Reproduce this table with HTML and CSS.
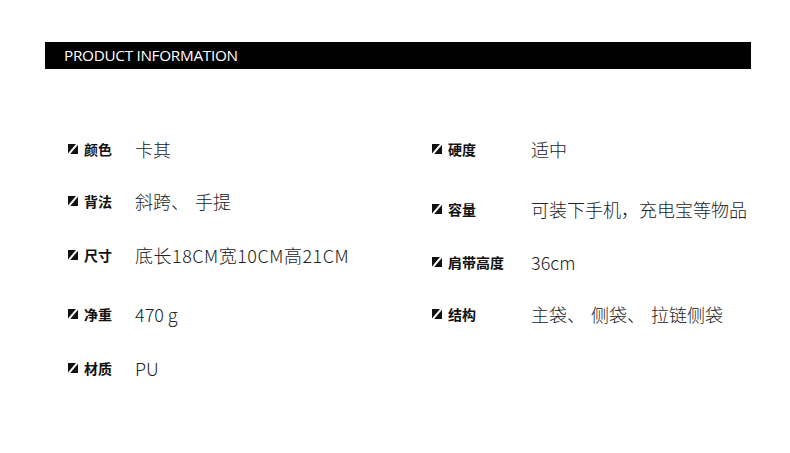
FILE: index.html
```html
<!DOCTYPE html>
<html lang="zh-CN">
<head>
    <meta charset="UTF-8">
    <meta name="viewport" content="width=device-width, initial-scale=1.0">
    <title>Product Information</title>
    <link rel="stylesheet" href="styles.css">
</head>
<body>
    <div class="page">
        <div class="title-bar">PRODUCT INFORMATION</div>

        <div class="info">
            <div class="col col-left">
                <div class="row">
                    <span class="mark"></span><span class="label">颜色</span><span class="value">卡其</span>
                </div>
                <div class="row">
                    <span class="mark"></span><span class="label">背法</span><span class="value">斜跨<span class="sep">、</span>手提</span>
                </div>
                <div class="row">
                    <span class="mark"></span><span class="label">尺寸</span><span class="value value-wide">底长18CM宽10CM高21CM</span>
                </div>
                <div class="row">
                    <span class="mark"></span><span class="label">净重</span><span class="value">470 g</span>
                </div>
                <div class="row">
                    <span class="mark"></span><span class="label">材质</span><span class="value">PU</span>
                </div>
            </div>
            <div class="col col-right">
                <div class="row">
                    <span class="mark"></span><span class="label">硬度</span><span class="value">适中</span>
                </div>
                <div class="row">
                    <span class="mark"></span><span class="label">容量</span><span class="value">可装下手机，充电宝等物品</span>
                </div>
                <div class="row">
                    <span class="mark"></span><span class="label">肩带高度</span><span class="value">36cm</span>
                </div>
                <div class="row">
                    <span class="mark"></span><span class="label">结构</span><span class="value">主袋<span class="sep">、</span>侧袋<span class="sep">、</span>拉链侧袋</span>
                </div>
            </div>
        </div>
    </div>
</body>
</html>
```

FILE: styles.css
```css
body {
    margin: 0;
    background: #fff;
    font-family: "Noto Sans CJK SC", "Noto Sans", sans-serif;
    color: #000;
}
.page {
    width: 790px;
    height: 453px;
    padding-top: 42px;
    box-sizing: border-box;
}
.title-bar {
    margin-left: 45px;
    width: 706px;
    height: 27px;
    background: #000;
    color: #fff;
    font-family: "Open Sans", sans-serif;
    font-size: 15.3px;
    line-height: 26px;
    padding-left: 19px;
    box-sizing: border-box;
    letter-spacing: -0.3px;
}
.info {
    display: flex;
    padding-left: 68px;
    padding-top: 66px;
}
.col {
    display: flex;
    flex-direction: column;
}
.col-left {
    width: 364px;
}
.row {
    display: flex;
    align-items: center;
    height: 28px;
}
.mark {
    width: 10px;
    height: 10px;
    background: #111;
    position: relative;
    overflow: hidden;
    margin-right: 6px;
}
.mark::after {
    content: "";
    position: absolute;
    left: 4px;
    top: -2px;
    width: 1.5px;
    height: 14px;
    background: #fff;
    transform: rotate(40deg);
}
.label {
    font-size: 14px;
    font-weight: bold;
    width: 51px;
    color: #111;
}
.col-right .label {
    width: 83px;
}
.value {
    font-size: 18px;
    font-weight: 300;
    color: #222;
}
.value-wide {
    letter-spacing: 0.5px;
}
.sep {
    margin-right: 6px;
}

/* row spacing follows the original artwork */
.col-left .row:nth-child(2) { margin-top: 24px; }
.col-left .row:nth-child(3) { margin-top: 26px; }
.col-left .row:nth-child(4) { margin-top: 31px; }
.col-left .row:nth-child(5) { margin-top: 26px; }
.col-right .row:nth-child(2) { margin-top: 32px; }
.col-right .row:nth-child(3) { margin-top: 25px; }
.col-right .row:nth-child(4) { margin-top: 24px; }
```
